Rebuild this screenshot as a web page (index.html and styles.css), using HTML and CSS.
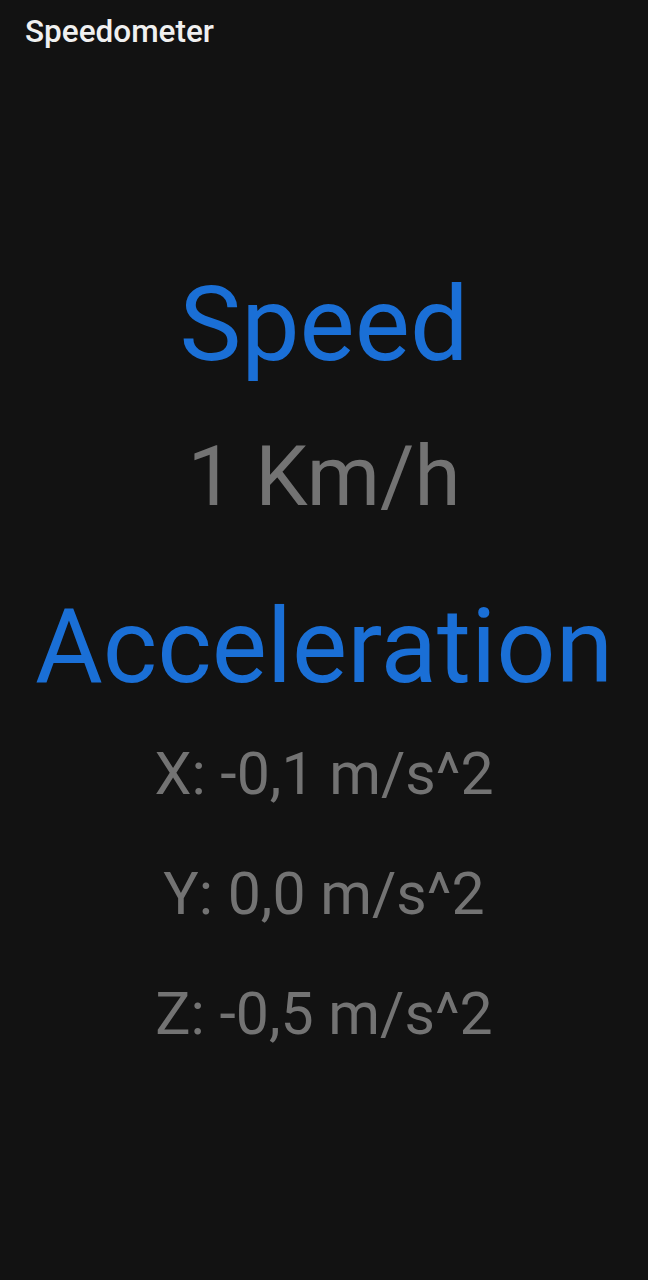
FILE: index.html
```html
<!DOCTYPE html>
<html>
<head>
<meta charset="utf-8">
<link rel="stylesheet" href="styles.css">
</head>
<body>
<header class="app-bar"><span class="app-title">Speedometer</span></header>
<main class="content">
  <div class="heading speed-heading">Speed</div>
  <div class="speed-value">1 Km/h</div>
  <div class="heading accel-heading">Acceleration</div>
  <div class="axes">
    <div class="axis">X: -0,1 m/s^2</div>
    <div class="axis">Y: 0,0 m/s^2</div>
    <div class="axis">Z: -0,5 m/s^2</div>
  </div>
</main>
</body>
</html>
```
FILE: styles.css
```css
html, body {
  margin: 0;
  padding: 0;
  background: #121212;
  width: 648px;
  height: 1280px;
  overflow: hidden;
  font-family: Roboto, "Noto Sans", sans-serif;
}
.app-bar {
  padding: 16px 0 0 25px;
  height: 31.5px;
}
.app-title {
  display: block;
  font-size: 31.5px;
  line-height: 31.5px;
  font-weight: 500;
  color: #f0f0f0;
}
.content {
  display: flex;
  flex-direction: column;
  align-items: center;
  padding-top: 225px;
}
.heading {
  font-size: 104px;
  line-height: 104px;
  color: #1a6fd6;
}
.speed-value {
  margin-top: 58px;
  font-size: 83.5px;
  line-height: 83.5px;
  color: #737373;
}
.accel-heading {
  margin-top: 77px;
}
.axes {
  margin-top: 45px;
  display: flex;
  flex-direction: column;
  align-items: center;
  gap: 61px;
}
.axis {
  font-size: 59px;
  line-height: 59px;
  color: #737373;
}
```
